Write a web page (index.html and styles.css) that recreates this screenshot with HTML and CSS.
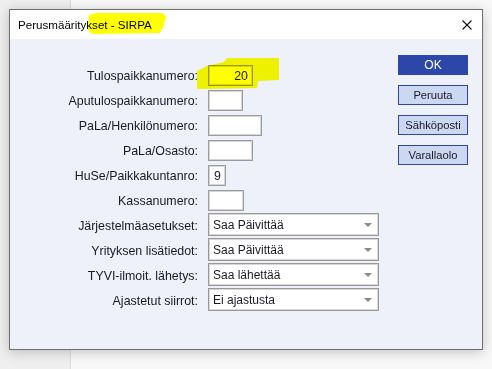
FILE: index.html
```html
<!DOCTYPE html>
<html lang="fi">
<head>
  <meta charset="UTF-8">
  <title>Perusmääritykset - SIRPA</title>
  <link rel="stylesheet" href="styles.css">
</head>
<body>
  <div class="dialog">
    <div class="titlebar">
      <span class="title">Perusmääritykset - SIRPA</span>
      <svg class="close" width="10" height="10" viewBox="0 0 10 10">
        <path d="M0.5 0.5 L9.5 9.5 M9.5 0.5 L0.5 9.5" stroke="#111" stroke-width="1.1" fill="none"/>
      </svg>
    </div>

    <div class="dialog-body">
      <div class="form">
        <label class="label">Tulospaikkanumero:</label>
        <input class="field num" style="width: 45px" value="20" readonly>

        <label class="label">Aputulospaikkanumero:</label>
        <input class="field" style="width: 35px" readonly>

        <label class="label">PaLa/Henkilönumero:</label>
        <input class="field" style="width: 54px" readonly>

        <label class="label">PaLa/Osasto:</label>
        <input class="field" style="width: 45px" readonly>

        <label class="label">HuSe/Paikkakuntanro:</label>
        <input class="field num" style="width: 18px" value="9" readonly>

        <label class="label">Kassanumero:</label>
        <input class="field" style="width: 36px" readonly>

        <label class="label">Järjestelmäasetukset:</label>
        <div class="select"><span>Saa Päivittää</span><i class="arrow"></i></div>

        <label class="label">Yrityksen lisätiedot:</label>
        <div class="select"><span>Saa Päivittää</span><i class="arrow"></i></div>

        <label class="label">TYVI-ilmoit. lähetys:</label>
        <div class="select"><span>Saa lähettää</span><i class="arrow"></i></div>

        <label class="label">Ajastetut siirrot:</label>
        <div class="select"><span>Ei ajastusta</span><i class="arrow"></i></div>
      </div>

      <div class="actions">
        <button class="btn btn-primary">OK</button>
        <button class="btn">Peruuta</button>
        <button class="btn">Sähköposti</button>
        <button class="btn">Varallaolo</button>
      </div>
    </div>
  </div>

  <!-- highlighter marks drawn over the screenshot -->
  <svg class="marker" width="492" height="369" viewBox="0 0 492 369">
    <polygon points="89,15 96,13 163,13 166,17 164,25 160,33 92,34 88,30" fill="#ffff00"/>
    <polygon points="197,71 207,66 224,62 227,58 279,58 279,80 258,81 257,88 197,89" fill="#ffff00"/>
  </svg>
</body>
</html>
```

FILE: styles.css
```css
* {
  box-sizing: border-box;
  margin: 0;
  padding: 0;
}

:root {
  --panel: #eef1fa;
  --text: #1a1a22;
  --field-border: #9c9c9c;
  --blue: #2c47a9;
  --blue-light: #ccd7f1;
  --font: "Liberation Sans", Arial, sans-serif;
}

body {
  width: 492px;
  height: 369px;
  overflow: hidden;
  font-family: var(--font);
  font-size: 12.4px;
  color: var(--text);
  background: linear-gradient(to right, #efefef 0, #efefef 70px, #dedede 70px, #dedede 71px, #f8f8f8 71px);
  padding: 9px 0 0 9px;
}

/* Dialog window */
.dialog {
  width: 474px;
  height: 341px;
  border: 1px solid #6e6e6e;
  background-color: var(--panel);
  box-shadow: 0 2px 12px rgba(0, 0, 0, 0.22);
}

.titlebar {
  display: flex;
  align-items: center;
  justify-content: space-between;
  height: 29px;
  padding: 0 10px 0 8px;
  background-color: #fff;
}

.title {
  font-size: 11.6px;
  color: #000;
}

/* Form */
.dialog-body {
  display: flex;
  align-items: flex-start;
}

.form {
  display: grid;
  grid-template-columns: 188px 171px;
  grid-auto-rows: 25px;
  column-gap: 10px;
  margin-top: 24px;
}

.label {
  justify-self: end;
  align-self: center;
}

.field {
  align-self: start;
  margin-top: 2px;
  height: 21px;
  padding: 0 4px;
  font-family: var(--font);
  font-size: 12.4px;
  color: var(--text);
  background-color: #fff;
  border: 1px solid var(--field-border);
  box-shadow: inset 0 0 0 1px #d6d6d6;
  outline: none;
}

.field.num {
  text-align: right;
}

.select {
  display: flex;
  align-items: center;
  justify-content: space-between;
  width: 171px;
  height: 23px;
  padding: 0 6px 0 4px;
  font-size: 12px;
  background-color: #fff;
  border: 1px solid #999;
  box-shadow: inset 0 0 0 1px #d8d8d8;
}

.arrow {
  width: 0;
  height: 0;
  border-left: 4px solid transparent;
  border-right: 4px solid transparent;
  border-top: 4px solid #8a8a8a;
}

/* Buttons */
.actions {
  display: flex;
  flex-direction: column;
  gap: 10px;
  margin-top: 16px;
  margin-left: 19px;
}

.btn {
  width: 70px;
  height: 20px;
  padding: 0;
  font-family: var(--font);
  font-size: 11.2px;
  color: var(--text);
  background-color: var(--blue-light);
  border: 1px solid var(--blue);
}

.btn-primary {
  color: #fff;
  font-size: 12px;
  background-color: var(--blue);
}

.marker {
  position: absolute;
  left: 0;
  top: 0;
  mix-blend-mode: multiply;
  pointer-events: none;
}
```
